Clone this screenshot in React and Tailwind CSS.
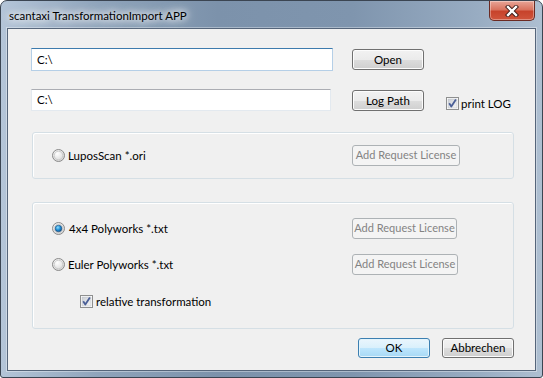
import React from "react";

const F = { fontFamily: 'Lato, "Noto Sans", sans-serif' };

function Radio({ checked }) {
  return (
    <svg width="13" height="13" viewBox="0 0 13 13" className="shrink-0">
      <defs>
        <radialGradient id={checked ? "rgc" : "rgu"} cx="40%" cy="35%" r="70%">
          <stop offset="0%" stopColor="#ffffff" />
          <stop offset="100%" stopColor="#d4d4d4" />
        </radialGradient>
        <radialGradient id="dot" cx="40%" cy="35%" r="70%">
          <stop offset="0%" stopColor="#8fe0ff" />
          <stop offset="55%" stopColor="#1b8ad3" />
          <stop offset="100%" stopColor="#0c4f8c" />
        </radialGradient>
      </defs>
      <circle cx="6.5" cy="6.5" r="6" fill={`url(#${checked ? "rgc" : "rgu"})`} stroke="#8b8b8b" strokeWidth="1" />
      <circle cx="6.5" cy="6.5" r="4.3" fill="none" stroke="#c4c4c4" strokeWidth="0.8" />
      {checked && <circle cx="6.5" cy="6.5" r="3.3" fill="url(#dot)" stroke="#1d4e7a" strokeWidth="0.6" />}
    </svg>
  );
}

function Check() {
  return (
    <svg width="13" height="13" viewBox="0 0 13 13" className="shrink-0">
      <defs>
        <linearGradient id="cbg" x1="0" y1="0" x2="1" y2="1">
          <stop offset="0%" stopColor="#cbcfd5" />
          <stop offset="100%" stopColor="#f6f6f6" />
        </linearGradient>
      </defs>
      <rect x="0.5" y="0.5" width="12" height="12" fill="#fff" stroke="#8e8f8f" />
      <rect x="2" y="2" width="9" height="9" fill="url(#cbg)" stroke="#b9bcc1" strokeWidth="0.5" />
      <path d="M3.2 6.3 L5.3 9.6 L9.9 2.6" fill="none" stroke="#4a5f97" strokeWidth="1.8" strokeLinejoin="round" />
    </svg>
  );
}

function Btn({ children, w = "w-[72px]", h = "h-[21px]", className = "" }) {
  return (
    <div
      className={`${w} ${h} ${className} rounded-[3px] border border-[#707070] bg-[linear-gradient(#f2f2f2_0%,#ebebeb_50%,#dddddd_51%,#cfcfcf_100%)] shadow-[inset_0_0_0_1px_#fcfcfc] flex items-center justify-center text-[11.5px] text-black`}
    >
      {children}
    </div>
  );
}

function DisBtn({ w = "w-[108px]" }) {
  return (
    <div className={`${w} h-[21px] rounded-[3px] border border-[#adb2b5] bg-[#f4f4f4] flex items-center justify-center text-[11px] text-[#838383] whitespace-nowrap`}>
      Add Request License
    </div>
  );
}

export default function App() {
  return (
    <div style={F} className="w-[543px] h-[378px] relative">
      <div className="w-[543px] h-[378px] rounded-t-[7px] rounded-b-[3px] border border-[#3b4552] bg-[linear-gradient(90deg,#b4c5d8_0%,#8fa4bb_18%,#7c92ab_40%,#7f95ae_65%,#98acc2_88%,#aebfd1_100%)] flex flex-col pt-[27px] px-[6px] pb-[6px] relative overflow-hidden">
        {/* title */}
        <div className="absolute left-[8px] top-[6px] text-[11.5px] text-black [text-shadow:0_0_6px_#ffffff,0_0_10px_#ffffff,0_0_14px_#ffffff]">
          scantaxi TransformationImport APP
        </div>
        {/* close button */}
        <div className="absolute left-[488px] top-0 w-[46px] h-[20px] rounded-b-[5px] border border-t-0 border-[#6b2a22] bg-[linear-gradient(#e8a597_0%,#d9735f_45%,#c7432b_55%,#d0553c_100%)] shadow-[inset_0_0_0_1px_rgba(255,255,255,0.35)] flex items-center justify-center">
          <svg width="14" height="12" viewBox="0 0 14 12">
            <path d="M3 2 L11 10 M11 2 L3 10" stroke="#3a1a16" strokeWidth="4.2" strokeLinecap="square" />
            <path d="M3 2 L11 10 M11 2 L3 10" stroke="#ffffff" strokeWidth="2.4" strokeLinecap="square" />
          </svg>
        </div>

        {/* client area */}
        <div className="flex-1 border border-[#55657a] shadow-[0_0_0_1px_rgba(255,255,255,0.35)] bg-[#f0f0f0] flex flex-col pl-[23px] pt-[19px] text-[11.5px]">
          {/* row 1 */}
          <div className="flex items-start">
            <div className="w-[302px] h-[23px] bg-white border border-[#b5cfe7] border-t-[#3d7bad] flex items-center pl-[5px]">
              C:\
            </div>
            <Btn className="ml-[19px] mt-[1px]">Open</Btn>
          </div>
          {/* row 2 */}
          <div className="flex items-start mt-[18px]">
            <div className="w-[300px] h-[22px] bg-white border border-[#e3e9ef] border-t-[#abadb3] flex items-center pl-[5px]">
              C:\
            </div>
            <Btn className="ml-[21px] mt-[1px]">Log Path</Btn>
            <div className="ml-[22px] mt-[8px] flex items-center">
              <Check />
              <span className="ml-[2px] leading-[13px]">print LOG</span>
            </div>
          </div>

          {/* group 1 */}
          <div className="mt-[21px] ml-[1px] w-[482px] h-[47px] rounded-[3px] border border-[#d5dfe5] shadow-[inset_1px_1px_0_#fff] flex items-center pl-[19px]">
            <div className="w-[300px] flex items-center">
              <Radio />
              <span className="ml-[3px]">LuposScan *.ori</span>
            </div>
            <DisBtn />
          </div>

          {/* group 2 */}
          <div className="mt-[23px] ml-[1px] w-[482px] h-[127px] rounded-[3px] border border-[#d5dfe5] shadow-[inset_1px_1px_0_#fff] flex flex-col pl-[19px] pt-[15px]">
            <div className="flex items-center h-[21px]">
              <div className="w-[300px] flex items-center">
                <Radio checked />
                <span className="ml-[4px]">4x4 Polyworks *.txt</span>
              </div>
              <DisBtn w="w-[105px]" />
            </div>
            <div className="flex items-center h-[21px] mt-[15px]">
              <div className="w-[300px] flex items-center">
                <Radio />
                <span className="ml-[3px]">Euler Polyworks *.txt</span>
              </div>
              <DisBtn w="w-[106px]" />
            </div>
            <div className="flex items-center mt-[20px] ml-[28px]">
              <Check />
              <span className="ml-[3px] leading-[13px]">relative transformation</span>
            </div>
          </div>

          {/* footer */}
          <div className="flex justify-end pr-[21px] mt-[9px] gap-[12px]">
            <div className="w-[72px] h-[20px] rounded-[3px] border border-[#3c7fb1] bg-[linear-gradient(#eaf6fd_0%,#d9f0fc_50%,#bee6fd_51%,#a7d9f5_100%)] shadow-[inset_0_0_0_1px_#e3f4fc] flex items-center justify-center">
              OK
            </div>
            <Btn h="h-[20px]">Abbrechen</Btn>
          </div>
        </div>
      </div>
    </div>
  );
}
